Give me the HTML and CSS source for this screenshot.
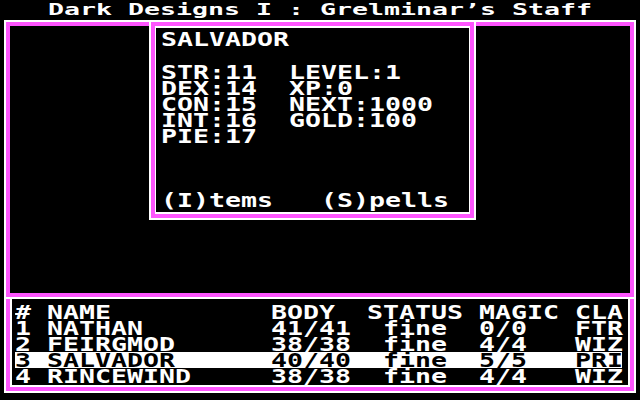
FILE: index.html
```html
<!DOCTYPE html>
<html>
<head>
<meta charset="utf-8">
<link rel="stylesheet" href="styles.css">
</head>
<body>
<div class="screen">
  <div class="title"><span class="txt">Dark Designs I : Grelminar’s Staff</span></div>
  <div class="view">
    <div class="view-in">
      <div class="stats">
        <div class="stats-m">
          <div class="stats-in">
            <div class="line name"><span class="txt">SALVADOR</span></div>
            <div class="attrs">
              <div class="line"><span class="txt">STR:11  LEVEL:1</span></div>
              <div class="line"><span class="txt">DEX:14  XP:0</span></div>
              <div class="line"><span class="txt">CON:15  NEXT:1000</span></div>
              <div class="line"><span class="txt">INT:16  GOLD:100</span></div>
              <div class="line"><span class="txt">PIE:17</span></div>
            </div>
            <div class="line cmds"><span class="txt">(I)tems   (S)pells</span></div>
          </div>
        </div>
      </div>
    </div>
  </div>
  <div class="party">
    <div class="party-m">
      <div class="party-in">
        <div class="row"><span class="txt"># NAME          BODY  STATUS MAGIC CLA</span></div>
        <div class="row"><span class="txt">1 NATHAN        41/41  fine  0/0   FTR</span></div>
        <div class="row"><span class="txt">2 FEIRGMOD      38/38  fine  4/4   WIZ</span></div>
        <div class="row sel"><span class="txt">3 SALVADOR      40/40  fine  5/5   PRI</span></div>
        <div class="row"><span class="txt">4 RINCEWIND     38/38  fine  4/4   WIZ</span></div>
      </div>
    </div>
  </div>
</div>
</body>
</html>
```
FILE: styles.css
```css
html, body {
  margin: 0;
  padding: 0;
  background: #000;
}
body {
  color: #fff;
  font-family: "DejaVu Sans Mono", "Liberation Mono", monospace;
  font-weight: bold;
  font-size: 19px;
  line-height: 16px;
}
* { box-sizing: border-box; }

.screen {
  width: 640px;
  height: 400px;
  overflow: hidden;
  background: #000;
}

.txt {
  display: block;
  width: max-content;
  white-space: pre;
  transform: scaleX(1.3986);
  transform-origin: 0 0;
  height: 16px;
}

.title {
  height: 20px;
  padding-left: 48px;
  font-size: 16px;
  line-height: 19px;
}
.title .txt {
  height: 19px;
  transform: scaleX(1.661);
}

.view {
  margin-left: 4px;
  width: 632px;
  height: 279px;
  border: 2px solid #fff;
}
.view-in {
  position: relative;
  height: 100%;
  border: 4px solid #ff55ff;
}

.stats {
  position: absolute;
  left: 139px;
  top: -6px;
  width: 327px;
  height: 200px;
  border: 2px solid #fff;
  background: #000;
}
.stats-m {
  height: 100%;
  border: 4px solid #ff55ff;
}
.stats-in {
  height: 100%;
  border: 2px solid #fff;
  border-left-width: 1px;
  border-right-width: 1px;
  padding: 3px 0 0 5px;
  display: flex;
  flex-direction: column;
}
.line {
  height: 16px;
}
.name {
  margin-bottom: 17px;
}
.cmds {
  margin-top: 48px;
}

.party {
  margin-left: 4px;
  width: 632px;
  border: 2px solid #fff;
  border-top: 0;
}
.party-m {
  border: 4px solid #ff55ff;
  border-top: 0;
}
.party-in {
  border: 2px solid #fff;
  border-top: 0;
  padding: 5px 0 1px 0;
}
.row {
  margin-left: 3px;
  width: 607px;
  height: 16px;
}
.row.sel {
  background: #fff;
  color: #000;
}
```
